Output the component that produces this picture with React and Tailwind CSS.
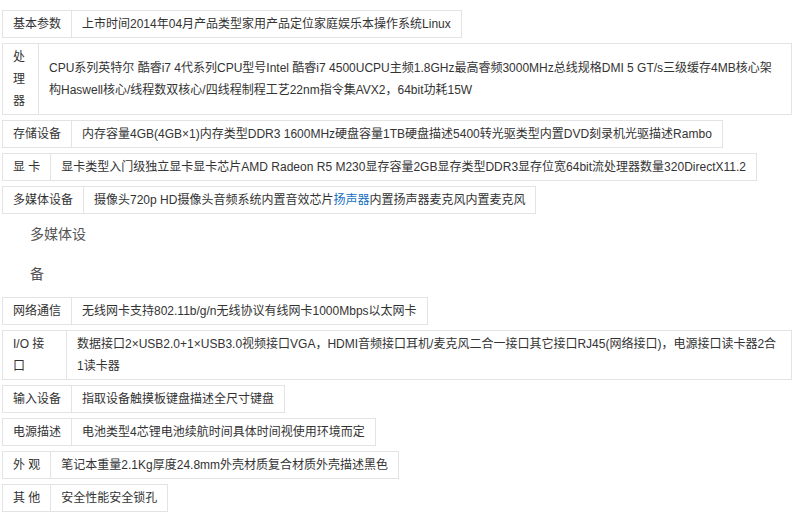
import React from "react";

const rows1 = [
  { label: "基本参数", value: "上市时间2014年04月产品类型家用产品定位家庭娱乐本操作系统Linux" },
  {
    label: (
      <>
        处<br />理<br />器
      </>
    ),
    labelClass: "w-[36px]",
    value:
      "CPU系列英特尔 酷睿i7 4代系列CPU型号Intel 酷睿i7 4500UCPU主频1.8GHz最高睿频3000MHz总线规格DMI 5 GT/s三级缓存4MB核心架构Haswell核心/线程数双核心/四线程制程工艺22nm指令集AVX2，64bit功耗15W",
  },
  { label: "存储设备", value: "内存容量4GB(4GB×1)内存类型DDR3 1600MHz硬盘容量1TB硬盘描述5400转光驱类型内置DVD刻录机光驱描述Rambo" },
  { label: "显 卡", value: "显卡类型入门级独立显卡显卡芯片AMD Radeon R5 M230显存容量2GB显存类型DDR3显存位宽64bit流处理器数量320DirectX11.2" },
  {
    label: "多媒体设备",
    value: (
      <>
        摄像头720p HD摄像头音频系统内置音效芯片<span className="text-[#136ec2]">扬声器</span>内置扬声器麦克风内置麦克风
      </>
    ),
    last: true,
  },
];

const rows2 = [
  { label: "网络通信", value: "无线网卡支持802.11b/g/n无线协议有线网卡1000Mbps以太网卡" },
  {
    label: (
      <>
        I/O 接<br />口
      </>
    ),
    labelClass: "w-[64px]",
    value: "数据接口2×USB2.0+1×USB3.0视频接口VGA，HDMI音频接口耳机/麦克风二合一接口其它接口RJ45(网络接口)，电源接口读卡器2合1读卡器",
  },
  { label: "输入设备", value: "指取设备触摸板键盘描述全尺寸键盘" },
  { label: "电源描述", value: "电池类型4芯锂电池续航时间具体时间视使用环境而定" },
  { label: "外 观", value: "笔记本重量2.1Kg厚度24.8mm外壳材质复合材质外壳描述黑色" },
  { label: "其 他", value: "安全性能安全锁孔" },
];

const Row = ({ label, value, labelClass = "", last }) => (
  <div className={`flex w-fit border border-[#e3e3e3] ${last ? "mb-0" : "mb-[5px]"}`}>
    <div className={`shrink-0 flex items-center px-[10px] py-[2px] border-r border-[#e3e3e3] whitespace-pre ${labelClass}`}>
      <span>{label}</span>
    </div>
    <div className="flex items-center px-[10px] py-[2px]">
      <span>{value}</span>
    </div>
  </div>
);

export default function App() {
  return (
    <div
      className="min-h-[514px] bg-white pt-[10px] pl-[2px] pr-[4px] text-[12px] leading-[22px] text-[#333]"
      style={{ fontFamily: '"Liberation Sans", Arial, "Noto Sans CJK SC", sans-serif' }}
    >
      {rows1.map((r, i) => (
        <Row key={i} {...r} />
      ))}
      {/* overflowed label text */}
      <div className="h-[80px] mb-[3px] pl-[28px] text-[14px] leading-[40px] text-[#555]">
        多媒体设<br />备
      </div>
      {rows2.map((r, i) => (
        <Row key={i} {...r} />
      ))}
    </div>
  );
}
